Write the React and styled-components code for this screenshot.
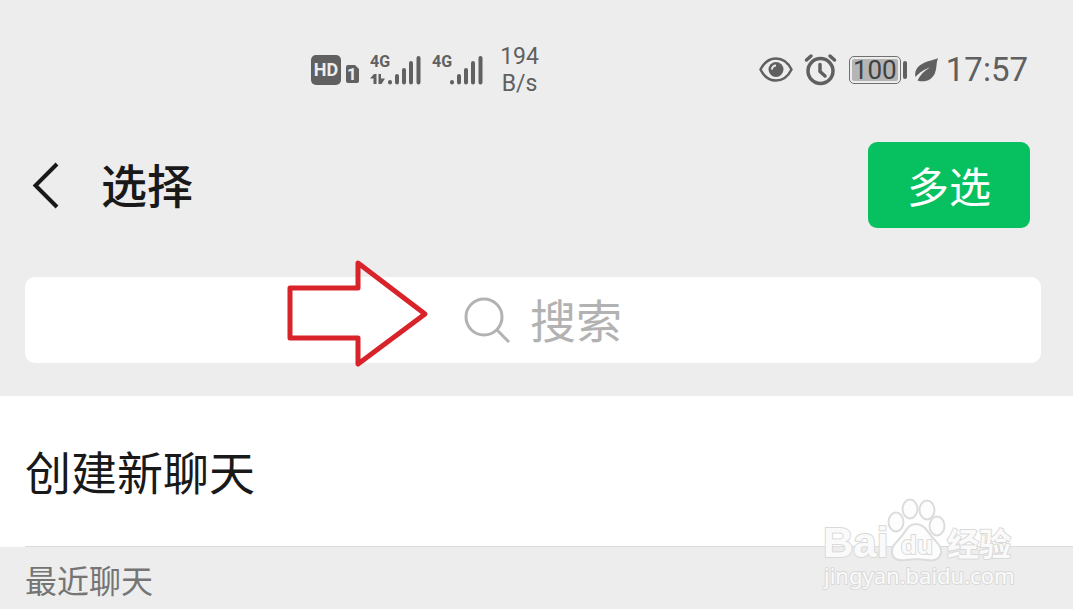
import React from 'react'
import styled, { createGlobalStyle } from 'styled-components'

const GlobalStyle = createGlobalStyle`
	* {
		box-sizing: border-box;
	}
	body {
		margin: 0;
		background: #ffffff;
		font-family: Roboto, 'Noto Sans CJK SC', sans-serif;
		color: #191919;
	}
`

const Page = styled.div`
	position: relative;
	width: 100%;
`

const TopArea = styled.header`
	background: #ededed;
	padding-bottom: 33px;
`

const StatusBar = styled.div`
	height: 140px;
	padding: 0 45px 0 29%;
	display: flex;
	align-items: center;
	justify-content: space-between;
	color: #606060;
`

const StatusGroup = styled.div`
	display: flex;
	align-items: center;
	gap: ${({ $gap }) => $gap}px;
`

const StatusIcon = styled.svg`
	display: block;
	flex: none;
	overflow: visible;
`

const IconText = styled.text`
	font-family: Roboto, sans-serif;
	font-weight: 700;
	font-size: ${({ $size }) => $size}px;
`

const Speed = styled.div`
	margin-left: 6px;
	font-size: 23px;
	line-height: 27px;
	text-align: center;
`

const Battery = styled.div`
	display: flex;
	align-items: center;
	gap: 2px;

	&::after {
		content: '';
		width: 4px;
		height: 18px;
		border-radius: 2px;
		background: #606060;
	}
`

const BatteryLevel = styled.span`
	width: 52px;
	height: 28px;
	padding: 2px;
	border: 1px solid #707070;
	border-radius: 5px;
	background: #b5b5b5;
	background-clip: content-box;
	color: #404040;
	font-size: 26px;
	line-height: 22px;
	text-align: center;
`

const Clock = styled.time`
	font-size: 33px;
	line-height: 40px;
`

const TitleBar = styled.div`
	height: 90px;
	padding: 0 43px 0 25px;
	display: flex;
	align-items: center;
`

const BackButton = styled.button`
	width: 40px;
	height: 60px;
	padding: 0;
	border: 0;
	background: none;
	color: inherit;
	cursor: pointer;
`

const Title = styled.h1`
	margin: 0 auto 0 36px;
	padding-top: 4px;
	font-size: 46px;
	font-weight: 500;
	line-height: 60px;
`

const MultiButton = styled.button`
	width: 162px;
	height: 86px;
	padding: 8px 0 0;
	border: 0;
	border-radius: 9px;
	background: #07c160;
	color: #ffffff;
	font-family: inherit;
	font-size: 42px;
	line-height: 60px;
	cursor: pointer;
`

const SearchBox = styled.label`
	position: relative;
	height: 86px;
	margin: 47px 32px 0 25px;
	padding-left: 20px;
	display: flex;
	align-items: center;
	justify-content: center;
	gap: 20px;
	border-radius: 10px;
	background: #ffffff;
`

const SearchInput = styled.input`
	width: 92px;
	height: 66px;
	padding: 4px 0 0;
	border: 0;
	outline: 0;
	background: none;
	font-family: inherit;
	font-size: 46px;
	color: #191919;

	&::placeholder {
		color: #b2b2b2;
		opacity: 1;
	}
`

const Pointer = styled.svg`
	position: absolute;
	top: -20px;
	left: calc(50% - 248px);
	pointer-events: none;
`

const NewChat = styled.a`
	height: 150px;
	padding: 6px 25px 0;
	display: flex;
	align-items: center;
	background: #ffffff;
	color: inherit;
	font-size: 46px;
	line-height: 60px;
	text-decoration: none;
`

const Divider = styled.hr`
	height: 1px;
	margin: 0 0 0 25px;
	border: 0;
	background: #dcdcdc;
`

const SectionLabel = styled.h2`
	height: 62px;
	margin: 0;
	padding: 8px 25px 0;
	display: flex;
	align-items: center;
	background: #ededed;
	color: #757575;
	font-size: 32px;
	font-weight: 400;
	line-height: 40px;
`

const Watermark = styled.svg`
	position: absolute;
	right: 53px;
	bottom: 15px;
	pointer-events: none;
`

const MarkText = styled.text`
	font-family: ${({ $family }) => $family}, sans-serif;
	font-size: ${({ $size }) => $size}px;
	font-weight: ${({ $weight }) => $weight || 400};
	fill: #fafafa;
	stroke: #d9d9d9;
	stroke-width: 2px;
	stroke-linejoin: round;
	paint-order: stroke;
`

function HdIcon() {
	return (
		<StatusIcon width='48' height='30' viewBox='0 0 48 30' fill='currentColor'>
			<rect width='30' height='30' rx='5' />
			<IconText $size={18} x='15' y='21' textAnchor='middle' fill='#ededed'>
				HD
			</IconText>
			<path d='M37 10h7l4 4v12a2 2 0 0 1-2 2h-9a2 2 0 0 1-2-2V12a2 2 0 0 1 2-2z' />
			<IconText $size={17} x='41' y='25' textAnchor='middle' fill='#ededed'>
				1
			</IconText>
		</StatusIcon>
	)
}

function SignalIcon({ data }) {
	return (
		<StatusIcon width='51' height='32' viewBox='0 0 51 32' fill='currentColor'>
			<IconText $size={16} x='0' y='13'>
				4G
			</IconText>
			{data && (
				<path d='M0 24.500L4 20h2.500v10H3.500v-5.500zM8.500 20h2.500v4.500h4L11.500 30h-3z' />
			)}
			<g stroke='currentColor' strokeWidth='4' strokeLinecap='round'>
				<path d='M20 28v.5M27 22v6.500M34 16v12.500M41 9v19.500M48.500 4v24.500' />
			</g>
		</StatusIcon>
	)
}

function EyeIcon() {
	return (
		<StatusIcon width='34' height='26' viewBox='0 0 34 26' fill='none'>
			<path
				d='M1.500 12.500C5 5.500 10.500 1.500 17 1.500S29 5.500 32.500 12.500C29 19.500 23.500 23.500 17 23.500S5 19.500 1.500 12.500z'
				stroke='currentColor'
				strokeWidth='2.500'
			/>
			<circle cx='17' cy='12.500' r='7.500' fill='currentColor' />
			<path d='M13 12.500a4 4 0 0 1 4-4' stroke='#ededed' strokeWidth='2' />
		</StatusIcon>
	)
}

function AlarmIcon() {
	return (
		<StatusIcon
			width='32'
			height='32'
			viewBox='0 0 32 32'
			fill='none'
			stroke='currentColor'
			strokeLinecap='round'
			strokeLinejoin='round'
		>
			<circle cx='15.500' cy='17' r='12.500' strokeWidth='3.500' />
			<path d='M15 10.500v7l5 4.500' strokeWidth='3.500' />
			<path d='M1.500 6l4.500-4M29.500 6L25 2' strokeWidth='3.500' />
		</StatusIcon>
	)
}

function LeafIcon() {
	return (
		<StatusIcon width='23' height='24' viewBox='0 0 23 24'>
			<path
				d='M23 0C20 2 13 2.500 7 6C1 9.500-.5 14 .5 19C5 14 9 11.500 15 9.500C9 13 5 17 2.500 22.500C10 25 17 22 20 15C22 10 21 5 23 0z'
				fill='currentColor'
			/>
		</StatusIcon>
	)
}

function BaiduMark() {
	return (
		<Watermark width='198' height='98' viewBox='0 0 198 98' aria-label='Baidu'>
			<MarkText $family="'Liberation Sans'" $weight={700} $size={42} x='1' y='61'>
				Bai
			</MarkText>
			<g fill='#fdfdfd' stroke='#dcdcdc' strokeWidth='2'>
				<ellipse cx='74' cy='26' rx='7.500' ry='9.500' />
				<ellipse cx='88' cy='13' rx='7.500' ry='9.500' />
				<ellipse cx='105' cy='14' rx='7.500' ry='9.500' />
				<ellipse cx='115' cy='30' rx='7.500' ry='9.500' />
				<path d='M94 28c8 0 11 7 16 13s10 9 9 16c-2 8-9 8-14 7-7-1-14-1-21 0-6 1-13 0-14-7-1-7 4-10 9-16s7-13 15-13z' />
			</g>
			<MarkText
				$family="'Liberation Sans'"
				$weight={700}
				$size={26}
				x='79'
				y='58'
			>
				du
			</MarkText>
			<MarkText
				$family="'Noto Sans CJK SC'"
				$weight={700}
				$size={32}
				x='125'
				y='60'
			>
				经验
			</MarkText>
			<MarkText $family="'Noto Sans'" $size={22} x='2' y='88'>
				jingyan.baidu.com
			</MarkText>
		</Watermark>
	)
}

function App() {
	return (
		<Page>
			<GlobalStyle />
			<TopArea>
				<StatusBar>
					<StatusGroup $gap={11}>
						<HdIcon />
						<SignalIcon data />
						<SignalIcon />
						<Speed>
							194
							<br />
							B/s
						</Speed>
					</StatusGroup>
					<StatusGroup $gap={8}>
						<StatusGroup $gap={12}>
							<EyeIcon />
							<AlarmIcon />
							<Battery>
								<BatteryLevel>100</BatteryLevel>
							</Battery>
						</StatusGroup>
						<LeafIcon />
						<Clock>17:57</Clock>
					</StatusGroup>
				</StatusBar>
				<TitleBar>
					<BackButton aria-label='返回'>
						<svg width='40' height='60' viewBox='0 0 40 60' fill='none'>
							<path
								d='M32 9L10.500 30.500L32 52'
								stroke='currentColor'
								strokeWidth='4'
							/>
						</svg>
					</BackButton>
					<Title>选择</Title>
					<MultiButton>多选</MultiButton>
				</TitleBar>
				<SearchBox>
					<svg
						width='46'
						height='46'
						viewBox='0 0 46 46'
						fill='none'
						stroke='#b2b2b2'
						strokeWidth='3'
					>
						<circle cx='20' cy='20' r='18' />
						<path d='M32 32L45 45' />
					</svg>
					<SearchInput type='text' placeholder='搜索' aria-label='搜索' />
					<Pointer width='144' height='112' viewBox='0 0 144 112'>
						<path
							d='M5 31H73V6L140 57L73 107V81H5z'
							fill='none'
							stroke='#d9232b'
							strokeWidth='5'
							strokeLinejoin='round'
						/>
					</Pointer>
				</SearchBox>
			</TopArea>
			<main>
				<NewChat href='#new'>创建新聊天</NewChat>
				<Divider />
				<SectionLabel>最近聊天</SectionLabel>
			</main>
			<BaiduMark />
		</Page>
	)
}

export default App
